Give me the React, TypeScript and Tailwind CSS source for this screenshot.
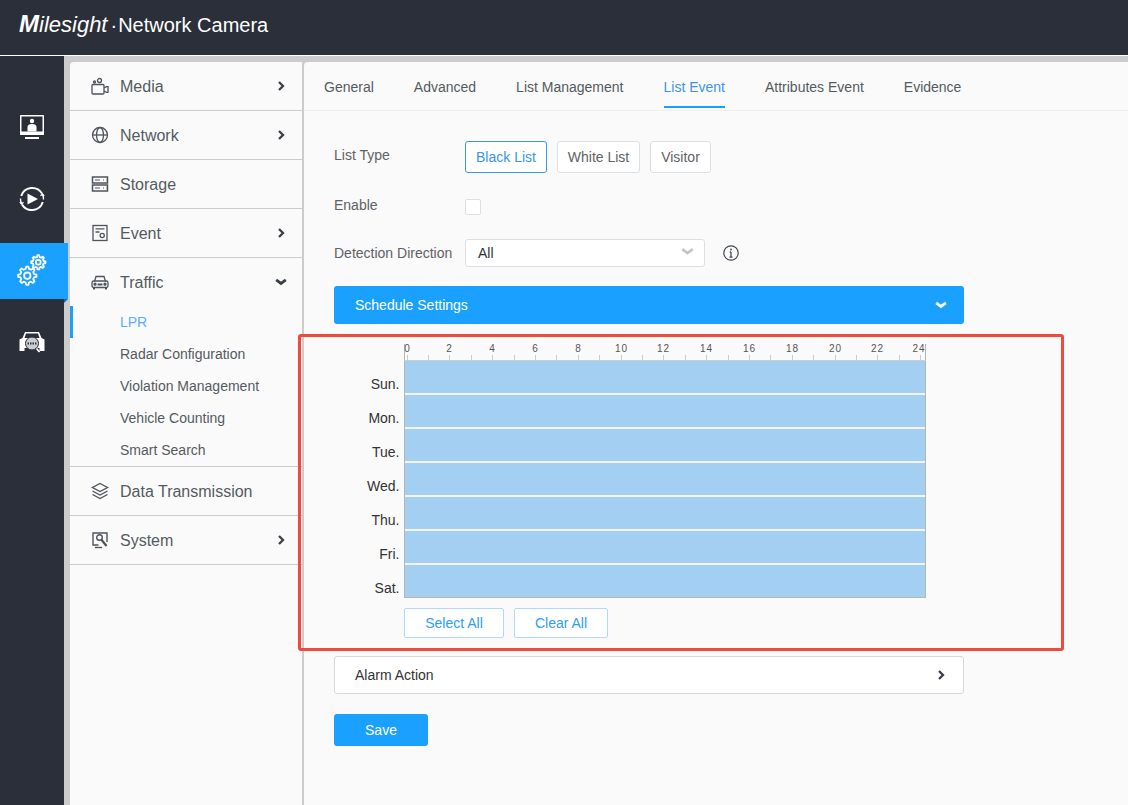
import React from "react";

const ic = "#4f545c";

function Chevron({ down, color = "#3a3f47", size = 10, sw = 2.3 }: { down?: boolean; color?: string; size?: number; sw?: number }) {
  return (
    <svg width={size} height={size} viewBox="0 0 10 10" fill="none" stroke={color} strokeWidth={sw}>
      {down ? <path d="M1 3.200 5 6.200 9 3.200" /> : <path d="M3 1 7 5 3 9" />}
    </svg>
  );
}

function gearPath(cx: number, cy: number, r1: number, r2: number) {
  const pts: string[] = [];
  for (let i = 0; i < 8; i++) {
    const a = (i * Math.PI) / 4;
    const d = Math.PI / 8;
    const seq: [number, number][] = [
      [a - d * 0.62, r2],
      [a - d * 0.3, r1],
      [a + d * 0.3, r1],
      [a + d * 0.62, r2],
    ];
    seq.forEach(([t, r]) => pts.push(`${(cx + r * Math.cos(t)).toFixed(2)} ${(cy + r * Math.sin(t)).toFixed(2)}`));
  }
  return "M" + pts.join("L") + "Z";
}

const MediaIcon = () => (
  <svg width="18" height="18" viewBox="0 0 18 18" fill="none" stroke={ic} strokeWidth="1.300">
    <rect x="1" y="7.500" width="12" height="9.500" rx="1" />
    <path d="M13 11l2.500-1.300H17v5.600h-1.500L13 14" />
    <circle cx="8.500" cy="3.500" r="2" />
    <circle cx="3.500" cy="5" r="1" />
  </svg>
);
const GlobeIcon = () => (
  <svg width="18" height="18" viewBox="0 0 18 18" fill="none" stroke={ic} strokeWidth="1.300">
    <circle cx="9" cy="9" r="7.500" />
    <ellipse cx="9" cy="9" rx="3.500" ry="7.500" />
    <path d="M1.500 9h15" />
  </svg>
);
const StorageIcon = () => (
  <svg width="18" height="18" viewBox="0 0 18 18" fill="none" stroke={ic} strokeWidth="1.500">
    <rect x="1.500" y="2" width="15" height="6" />
    <rect x="1.500" y="10" width="15" height="6" />
    <path d="M4 5h5M4 13h5M12 5h1M15 5h.5M12 13h1M15 13h.5" strokeWidth="1.200" />
  </svg>
);
const EventIcon = () => (
  <svg width="18" height="18" viewBox="0 0 18 18" fill="none" stroke={ic} strokeWidth="1.300">
    <rect x="2" y="1.500" width="14" height="15" />
    <path d="M4.500 4.800h9M4.500 8h4" />
    <circle cx="11.200" cy="11.500" r="2.100" />
  </svg>
);
const CarIcon = () => (
  <svg width="18" height="18" viewBox="0 0 18 18" fill="none" stroke={ic} strokeWidth="1.300">
    <path d="M3.500 8.500 5 3.500h8l1.500 5" />
    <rect x="1" y="8" width="16" height="6.500" rx="1.800" />
    <path d="M3 14.500v2M15 14.500v2" strokeWidth="2" />
    <path d="M6.500 11.500h5" strokeWidth="2" />
    <circle cx="4" cy="11.200" r="1" fill={ic} />
    <circle cx="14" cy="11.200" r="1" fill={ic} />
  </svg>
);
const LayersIcon = () => (
  <svg width="18" height="18" viewBox="0 0 18 18" fill="none" stroke={ic} strokeWidth="1.400">
    <path d="M9 1.500 16.500 5.500 9 9.500 1.500 5.500Z" />
    <path d="M1.500 9 9 13 16.500 9M1.500 12.500 9 16.500 16.500 12.500" />
  </svg>
);
const SystemIcon = () => (
  <svg width="18" height="18" viewBox="0 0 18 18" fill="none" stroke={ic} strokeWidth="1.400">
    <path d="M7.500 14H2V2h14v9" />
    <path d="M4 16.500h7" />
    <circle cx="8.500" cy="6.500" r="2.800" />
    <path d="M10.500 8.800 15.500 15" strokeWidth="2.200" />
  </svg>
);

const items = [
  { label: "Media", icon: <MediaIcon />, arrow: true },
  { label: "Network", icon: <GlobeIcon />, arrow: true },
  { label: "Storage", icon: <StorageIcon /> },
  { label: "Event", icon: <EventIcon />, arrow: true },
];
const subs = ["LPR", "Radar Configuration", "Violation Management", "Vehicle Counting", "Smart Search"];
const tabs = ["General", "Advanced", "List Management", "List Event", "Attributes Event", "Evidence"];
const days = ["Sun.", "Mon.", "Tue.", "Wed.", "Thu.", "Fri.", "Sat."];

function MenuRow({ label, icon, arrow, down, border = true }: { label: string; icon: React.ReactNode; arrow?: boolean; down?: boolean; border?: boolean }) {
  return (
    <div className={"flex items-center pl-[21px] " + (down ? "pr-[15px] " : "pr-[16px] ") + (border ? "h-[49px] border-b border-[#cccccc] " : "h-[48px]")}>
      <div className="w-[29px] flex items-center">{icon}</div>
      <span className="text-[16px] text-[#555a61] flex-1 pt-[2px]">{label}</span>
      {arrow && <Chevron down={down} size={down ? 12 : 10} />}
    </div>
  );
}

function Ruler() {
  const ticks = Array.from({ length: 25 }, (_, i) => i);
  return (
    <svg width="522" height="21" className="block" style={{ fontFamily: "'Liberation Sans', sans-serif" }}>
      <path d="M0.500 4V21M521.500 4V21" stroke="#b5b5b5" />
      <path d="M0 20.500H522" stroke="#cccccc" />
      {ticks.map((i) => {
        const x = Math.floor(3 + i * 21.4) + 0.5;
        return (
          <g key={i}>
            <path d={`M${x} 15V20`} stroke="#cccccc" />
            {i % 2 === 0 && (
              <text x={i === 24 ? x - 2 : x - 0.5} y="12" fontSize="10" textAnchor="middle" fill="#555555" textLength={i >= 10 ? 12 : undefined}>
                {i}
              </text>
            )}
          </g>
        );
      })}
    </svg>
  );
}

export default function App() {
  return (
    <div className="relative w-[1128px] h-[805px] overflow-hidden bg-[#cccccc] flex flex-col font-['Liberation_Sans',Arial,sans-serif]">
      <header className="h-[56px] shrink-0 bg-[#2a2f3a] border-b border-white flex items-center pl-[19px] pb-[6px] text-white">
        <span className="italic text-[22px] leading-[28px]">
          <span className="font-bold text-[24px]">M</span>ilesight
        </span>
        <span className="text-[20px] ml-[3px] mr-[1px]">·</span>
        <span className="text-[20px]">Network Camera</span>
      </header>

      <div className="flex flex-1 min-h-0">
        <aside className="w-[64px] shrink-0 bg-[#2a2f3a] pt-[43px] flex flex-col gap-[16px]">
          <div className="h-[56px] flex items-center justify-center">
            <svg width="26" height="26" viewBox="0 0 26 26">
              <path fillRule="evenodd" fill="#fff" d="M1.500 1h23a.500.500 0 0 1 .500.500V20.500a.500.500 0 0 1-.500.500H1.500a.500.500 0 0 1-.500-.500V1.500A.500.500 0 0 1 1.500 1ZM2.500 2.500V17.500h21V2.500Z" />
              <circle cx="13" cy="7" r="2.200" fill="#fff" />
              <path d="M8.500 17.500v-4.500c0-2 1.500-3 4.500-3s4.500 1 4.500 3v4.500Z" fill="#fff" />
              <rect x="6" y="23" width="14" height="2" fill="#fff" />
            </svg>
          </div>
          <div className="h-[56px] flex items-center justify-center">
            <svg width="28" height="28" viewBox="0 0 28 28" fill="none" stroke="#fff" strokeWidth="2">
              <path d="M3.200 11A11.500 11.500 0 0 1 24 8.500" />
              <path d="M24.800 17A11.500 11.500 0 0 1 4 19.500" />
              <path d="M2.500 13.500a11.500 11.500 0 0 0 1 5M25.500 14.500a11.500 11.500 0 0 0-1-5" strokeWidth="1.400" />
              <path d="M1.800 16.800l1.700 2.200 2-1.800M26.200 11.200l-1.700-2.200-2 1.800" strokeWidth="1.200" />
              <path d="M9.500 8.500 20 14 9.500 19.500Z" fill="#fff" stroke="none" />
            </svg>
          </div>
          <div className="relative h-[56px] w-[68px] bg-[#1aa1ff] flex items-center justify-center pr-[4px] z-10 shrink-0">
            <svg width="34" height="34" viewBox="0 0 34 34" fill="none" stroke="#fff" strokeWidth="1.800" strokeLinejoin="round">
              <path d={gearPath(12.3, 21.7, 9.2, 7)} />
              <circle cx="12.300" cy="21.700" r="3.200" />
              <path d={gearPath(23.3, 8.3, 7.2, 5.4)} />
              <circle cx="23.300" cy="8.300" r="2.400" />
            </svg>
            <div className="absolute left-[64px] top-[56px] w-0 h-0 border-t-[4px] border-r-[4px] border-t-[#0d6db3] border-r-transparent" />
          </div>
          <div className="h-[56px] flex items-center justify-center">
            <svg width="26" height="24" viewBox="0 0 26 24">
              <path fill="#fff" fillRule="evenodd" d="M6 1h14l2.500 6 3 1.500V20h-5v-3h-15v3H.500V8.500l3-1.500ZM7 2.500 5.500 7h15L19 2.500Z" />
              <circle cx="13" cy="12.500" r="6.500" fill="#c9ccd2" stroke="#2a2f3a" />
              <path d="M8.500 12.500h9" stroke="#2a2f3a" strokeWidth="1.800" strokeDasharray="1.500 1" />
              <path d="M17.500 17.500l3 3.500" stroke="#fff" strokeWidth="1.800" />
            </svg>
          </div>
        </aside>

        <nav className="w-[232px] shrink-0 ml-[6px] mt-[6px] mr-[2px] bg-[#fafafa] rounded-tl-[4px]">
          {items.map((m) => (
            <MenuRow key={m.label} {...m} />
          ))}
          <MenuRow label="Traffic" icon={<CarIcon />} arrow down border={false} />
          <div className="border-b border-[#cccccc]">
            {subs.map((s, i) => (
              <div
                key={s}
                className={
                  "h-[32px] flex items-center text-[14px] " +
                  (i === 0 ? "border-l-[3px] border-[#1aa1ff] pl-[47px] text-[#5aaeff]" : "pl-[50px] text-[#555a61]")
                }
              >
                {s}
              </div>
            ))}
          </div>
          <MenuRow label="Data Transmission" icon={<LayersIcon />} />
          <MenuRow label="System" icon={<SystemIcon />} arrow />
        </nav>

        <main className="flex-1 mt-[6px] bg-[#fafafa] rounded-tl-[4px]">
          <div className="h-[49px] border-b border-[#eeeeee] flex gap-[40px] pl-[20px]">
            {tabs.map((t) => (
              <div
                key={t}
                className={
                  "h-[46px] flex items-center pt-[7px] text-[14px] border-b-2 " +
                  (t === "List Event" ? "text-[#3a94f0] border-[#1aa1ff]" : "text-[#555a61] border-transparent")
                }
              >
                {t}
              </div>
            ))}
          </div>

          <div className="pl-[30px] pt-[30px] w-[660px]">
            <div className="flex items-center h-[32px]">
              <div className="w-[131px] text-[14px] text-[#606266] -translate-y-[2px]">List Type</div>
              <div className="flex gap-[10px] text-[14px]">
                <div className="h-[32px] w-[82px] flex items-center justify-center rounded-[3px] bg-white border border-[#3a94f0] text-[#3a94f0]">Black List</div>
                <div className="h-[32px] w-[83px] flex items-center justify-center rounded-[3px] bg-white border border-[#dcdfe6] text-[#606266]">White List</div>
                <div className="h-[32px] w-[61px] flex items-center justify-center rounded-[3px] bg-white border border-[#dcdfe6] text-[#606266]">Visitor</div>
              </div>
            </div>

            <div className="flex items-center h-[16px] mt-[26px]">
              <div className="w-[131px] text-[14px] text-[#606266] -translate-y-[2px]">Enable</div>
              <div className="w-[16px] h-[16px] rounded-[2px] bg-white border border-[#dcdfe6]" />
            </div>

            <div className="flex items-center h-[28px] mt-[24px]">
              <div className="w-[131px] text-[14px] text-[#606266]">Detection Direction</div>
              <div className="w-[240px] h-[28px] rounded-[3px] bg-white border border-[#dcdfe6] flex items-center justify-between pl-[12px] pr-[10px] text-[14px] text-[#333333]">
                <span>All</span>
                <span className="-translate-y-[2px]">
                  <Chevron down color="#c0c4cc" size={13} sw={2} />
                </span>
              </div>
              <svg className="ml-[18px]" width="16" height="16" viewBox="0 0 16 16" fill="none" stroke="#444a52" strokeWidth="1.200">
                <circle cx="8" cy="8" r="7.200" />
                <path d="M8 7v5M6.500 12.200h3M6.800 7h1.200" strokeWidth="1.300" />
                <circle cx="8" cy="4.500" r=".9" fill="#444a52" stroke="none" />
              </svg>
            </div>

            <div className="mt-[19px] h-[38px] w-[630px] rounded-[3px] bg-[#1aa1ff] flex items-center justify-between pl-[21px] pr-[17px] text-[14px] text-white">
              <span>Schedule Settings</span>
              <Chevron down color="#ffffff" size={12} />
            </div>

            <div className="flex gap-[4.5px] mt-[16px]">
              <div className="w-[65.5px] pt-[20px] flex flex-col items-end text-[14px] text-[#333333]">
                {days.map((d) => (
                  <div key={d} className="h-[34px] pt-[14px] leading-[20px]">{d}</div>
                ))}
              </div>
              <div className="w-[522px]">
                <Ruler />
                <div className="flex flex-col gap-[2px] border-x border-b border-[#b5b5b5] bg-[#f4f4f4]">
                  {days.map((d) => (
                    <div key={d} className="h-[32px] bg-[#a3cff2]" />
                  ))}
                </div>
                <div className="flex gap-[10px] mt-[10px] text-[14px] text-[#2f9cff]">
                  <div className="w-[100px] h-[30px] flex items-center justify-center rounded-[2px] bg-white border border-[#b3d8ff]">Select All</div>
                  <div className="w-[94px] h-[30px] flex items-center justify-center rounded-[2px] bg-white border border-[#b3d8ff]">Clear All</div>
                </div>
              </div>
            </div>

            <div className="mt-[18px] h-[38px] w-[630px] rounded-[3px] bg-white border border-[#d8d8d8] flex items-center justify-between pl-[20px] pr-[17px] text-[14px] text-[#333333]">
              <span>Alarm Action</span>
              <Chevron />
            </div>

            <div className="mt-[20px] w-[94px] h-[32px] rounded-[3px] bg-[#1aa1ff] flex items-center justify-center text-[14px] text-white">Save</div>
          </div>
        </main>
      </div>

      <div className="absolute left-[298px] top-[334px] w-[766px] h-[317px] border-[3px] border-[#ef4a3c] rounded-[3px] pointer-events-none" />
    </div>
  );
}
